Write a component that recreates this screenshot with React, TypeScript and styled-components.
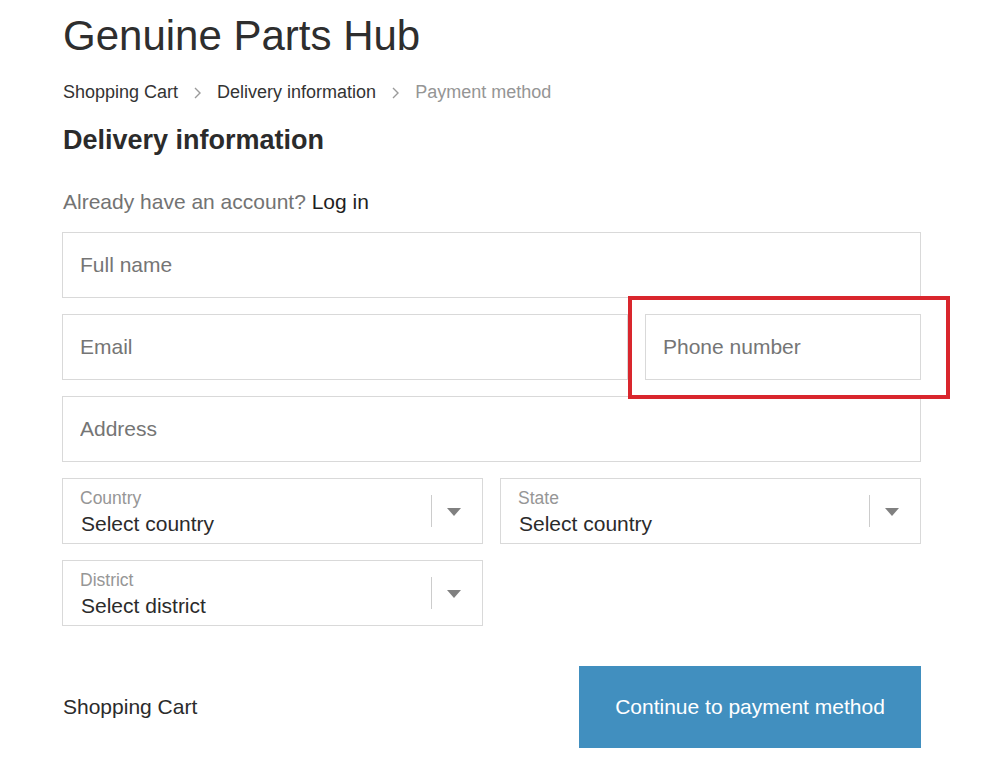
import React from "react";
import styled, { createGlobalStyle } from "styled-components";

const GlobalStyle = createGlobalStyle`
  html, body {
    margin: 0;
    padding: 0;
    background: #ffffff;
  }
  body {
    font-family: "Liberation Sans", Arial, sans-serif;
    color: #333333;
  }
  * { box-sizing: border-box; }
`;

const Page = styled.div`
  width: 983px;
  padding: 12px 62px 0 62px;
`;

const Title = styled.h1`
  margin: 0;
  font-size: 42px;
  line-height: 48px;
  font-weight: 400;
  color: #2e2e2e;
  padding-left: 1px;
`;

const Breadcrumb = styled.nav`
  margin-top: 20px;
  display: flex;
  align-items: center;
  gap: 16px;
  font-size: 18px;
  line-height: 24px;
  height: 24px;
  padding-left: 1px;
`;

const Crumb = styled.span<{ $muted?: boolean }>`
  color: ${(p) => (p.$muted ? "#959595" : "#333333")};
  white-space: nowrap;
`;

const Chevron = styled.svg`
  width: 7px;
  height: 12px;
  flex: none;
  margin-top: 1px;
`;

const Heading = styled.h2`
  margin: 20px 0 0 0;
  font-size: 27px;
  line-height: 32px;
  font-weight: 700;
  color: #2b2b2b;
  padding-left: 1px;
`;

const AccountLine = styled.p`
  margin: 34px 0 0 0;
  font-size: 21px;
  line-height: 24px;
  color: #737373;
  padding-left: 1px;
`;

const LoginLink = styled.a`
  color: #1f1f1f;
  text-decoration: none;
`;

const Form = styled.div`
  margin-top: 18px;
  display: flex;
  flex-direction: column;
  gap: 16px;
`;

const Row = styled.div<{ $cols: string }>`
  display: grid;
  grid-template-columns: ${(p) => p.$cols};
  column-gap: 17px;
`;

const FieldWrap = styled.div`
  position: relative;
`;

const Input = styled.input`
  display: block;
  width: 100%;
  height: 66px;
  border: 1px solid #d9d9d9;
  border-radius: 0;
  padding: 0 17px;
  font-family: "Liberation Sans", Arial, sans-serif;
  font-size: 21px;
  color: #333;
  background: #fff;
  outline: none;
  &::placeholder {
    color: #757575;
  }
`;

const Highlight = styled.div`
  position: absolute;
  top: -18px;
  left: -17px;
  right: -29px;
  bottom: -19px;
  border: 4px solid #d9262d;
  pointer-events: none;
`;

const SelectBox = styled.div`
  display: flex;
  align-items: center;
  height: 66px;
  border: 1px solid #d9d9d9;
  background: #fff;
`;

const SelectText = styled.div`
  flex: 1;
  padding: 8px 0 0 17px;
  align-self: stretch;
  display: flex;
  flex-direction: column;
`;

const SelectLabel = styled.span`
  font-size: 17.5px;
  line-height: 23px;
  color: #969696;
`;

const SelectValue = styled.span`
  font-size: 21px;
  line-height: 28px;
  color: #2b2b2b;
  padding-left: 1px;
`;

const Separator = styled.span`
  width: 1px;
  height: 32px;
  background: #cccccc;
  flex: none;
`;

const ArrowBox = styled.span`
  display: flex;
  align-items: center;
  padding: 1px 21px 0 15px;
`;

const Caret = styled.span`
  width: 0;
  height: 0;
  border-left: 7.5px solid transparent;
  border-right: 7.5px solid transparent;
  border-top: 8px solid #808080;
`;

const Footer = styled.div`
  margin-top: 40px;
  display: flex;
  justify-content: space-between;
  align-items: center;
`;

const BackLink = styled.a`
  font-size: 21px;
  color: #2b2b2b;
  text-decoration: none;
  padding-left: 1px;
`;

const ContinueButton = styled.button`
  width: 342px;
  height: 82px;
  border: none;
  border-radius: 0;
  background: #418fbf;
  color: #ffffff;
  font-family: "Liberation Sans", Arial, sans-serif;
  font-size: 21px;
  cursor: pointer;
`;

const ChevronIcon = () => (
  <Chevron viewBox="0 0 7 12">
    <polyline
      points="1,1 6,6 1,11"
      fill="none"
      stroke="#9a9a9a"
      strokeWidth="1.4"
    />
  </Chevron>
);

const Select = ({ label, value }: { label: string; value: string }) => (
  <SelectBox>
    <SelectText>
      <SelectLabel>{label}</SelectLabel>
      <SelectValue>{value}</SelectValue>
    </SelectText>
    <Separator />
    <ArrowBox>
      <Caret />
    </ArrowBox>
  </SelectBox>
);

export default function App() {
  return (
    <>
      <GlobalStyle />
      <Page>
        <Title>Genuine Parts Hub</Title>
        <Breadcrumb>
          <Crumb>Shopping Cart</Crumb>
          <ChevronIcon />
          <Crumb>Delivery information</Crumb>
          <ChevronIcon />
          <Crumb $muted>Payment method</Crumb>
        </Breadcrumb>
        <Heading>Delivery information</Heading>
        <AccountLine>
          Already have an account? <LoginLink href="#">Log in</LoginLink>
        </AccountLine>
        <Form>
          <Input placeholder="Full name" />
          <Row $cols="1fr 276px">
            <Input placeholder="Email" />
            <FieldWrap>
              <Input placeholder="Phone number" />
              <Highlight />
            </FieldWrap>
          </Row>
          <Input placeholder="Address" />
          <Row $cols="1fr 1fr">
            <Select label="Country" value="Select country" />
            <Select label="State" value="Select country" />
          </Row>
          <Row $cols="1fr 1fr">
            <Select label="District" value="Select district" />
          </Row>
        </Form>
        <Footer>
          <BackLink href="#">Shopping Cart</BackLink>
          <ContinueButton>Continue to payment method</ContinueButton>
        </Footer>
      </Page>
    </>
  );
}
